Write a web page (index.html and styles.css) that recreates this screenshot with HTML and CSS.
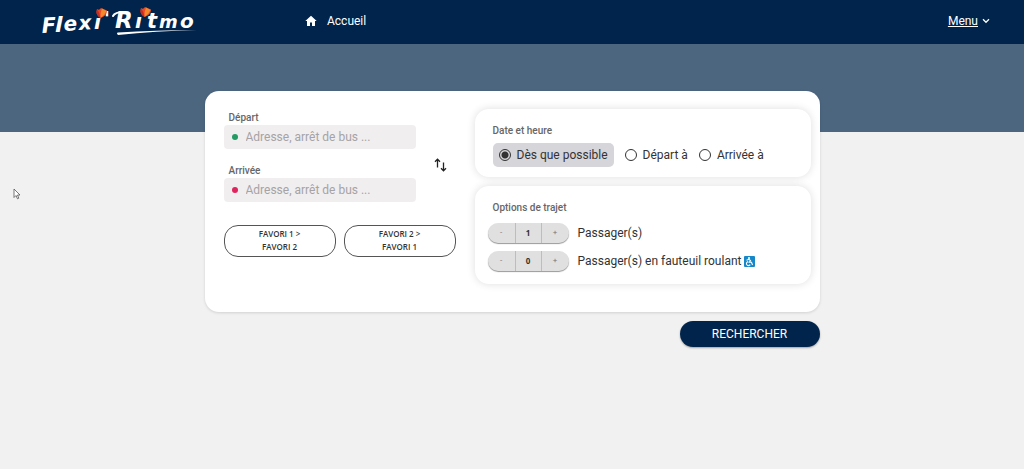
FILE: index.html
```html
<!DOCTYPE html>
<html lang="fr">
<head>
<meta charset="utf-8">
<meta name="viewport" content="width=device-width, initial-scale=1">
<title>Flexi'Ritmo</title>
<link rel="stylesheet" href="styles.css">
</head>
<body>
<header class="header">
  <a class="logo" href="#" aria-label="Flexi'Ritmo">
    <svg width="160" height="36" viewBox="0 0 160 36">
      <g class="logo-text">
        <text x="2" y="31" font-size="21" transform="rotate(-3 2 31)">F</text>
        <text x="15" y="30" font-size="22">l</text>
        <text x="24" y="29" font-size="20" transform="rotate(-4 24 29)">e</text>
        <text x="39" y="28" font-size="20" transform="rotate(-4 39 28)">x</text>
        <text x="54" y="27" font-size="20">ı</text>
        <text x="64" y="23" font-size="19">'</text>
        <text x="75" y="26" font-size="23">R</text>
        <text x="95" y="26" font-size="20">ı</text>
        <text x="107" y="26" font-size="21">t</text>
        <text x="119" y="26" font-size="18">m</text>
        <text x="140" y="26" font-size="20">o</text>
      </g>
      <path d="M73 14 Q75 10 84 10" fill="none" stroke="#fff" stroke-width="2" stroke-linecap="round"/>
      <path d="M78 30.500 Q115 28 157 28 Q115 29 78 33 Q76 31 78 30.500Z" fill="#fff"/>
      <g id="tulip">
        <path d="M57 7 Q59 9 61 6 L67 8.500 Q67 14 60.500 16 Q55 13 57 7Z" fill="#e94a27"/>
        <path d="M62 6.500 66.500 9Q65 13 60.500 16 Q60 11 62 6.500Z" fill="#f28a2c"/>
        <path d="M57 7 Q60 11 60.500 16 Q55 13 57 7Z" fill="#c92b22"/>
      </g>
      <use href="#tulip" x="44" y="-1"/>
    </svg>
  </a>
  <nav class="nav">
    <a class="home" href="#">
      <svg width="12" height="12" viewBox="0 0 12 12"><path d="M6 .8 11.700 6H10v5H7V7.500H5V11H2V6H.3Z" fill="#fff"/></svg>
      Accueil
    </a>
  </nav>
  <button class="menu" type="button"><span class="menu-text">Menu</span>
    <svg width="8" height="6" viewBox="0 0 8 6"><path d="M1 1.300 4 4.300 7 1.300" fill="none" stroke="#fff" stroke-width="1.300"/></svg>
  </button>
</header>
<main class="main">
  <form class="search">
    <div class="card">
      <div class="route">
        <div class="fields">
          <div class="inputs">
            <div class="field">
              <label class="label" for="from">Départ</label>
              <div class="box"><span class="dot"></span><input class="input" id="from" type="text" placeholder="Adresse, arrêt de bus ..."></div>
            </div>
            <div class="field">
              <label class="label" for="to">Arrivée</label>
              <div class="box"><span class="dot dot-to"></span><input class="input" id="to" type="text" placeholder="Adresse, arrêt de bus ..."></div>
            </div>
          </div>
          <button class="swap" type="button" aria-label="Inverser">
            <svg width="14" height="14" viewBox="0 0 14 14" fill="none" stroke="#222" stroke-width="1.300"><path d="M3.500 9.500V1.200M1 3.700 3.500 1.200 6 3.700M9.500 4.500v8.300M7 10.300l2.500 2.500 2.500-2.500"/></svg>
          </button>
        </div>
        <div class="favorites">
          <button class="favorite" type="button">FAVORI 1 &gt;<br>FAVORI 2</button>
          <button class="favorite" type="button">FAVORI 2 &gt;<br>FAVORI 1</button>
        </div>
      </div>
      <div class="settings">
        <section class="panel">
          <h2 class="title">Date et heure</h2>
          <div class="radios">
            <label class="choice choice-on"><input class="radio" type="radio" name="when" checked>Dès que possible</label>
            <label class="choice"><input class="radio" type="radio" name="when">Départ à</label>
            <label class="choice"><input class="radio" type="radio" name="when">Arrivée à</label>
          </div>
        </section>
        <section class="panel">
          <h2 class="title">Options de trajet</h2>
          <div class="options">
            <div class="option">
              <div class="stepper"><button class="step" type="button" aria-label="Moins">-</button><input class="count" id="seats" type="text" value="1"><button class="step" type="button" aria-label="Plus">+</button></div>
              <label for="seats">Passager(s)</label>
            </div>
            <div class="option">
              <div class="stepper"><button class="step" type="button" aria-label="Moins">-</button><input class="count" id="wheelchairs" type="text" value="0"><button class="step" type="button" aria-label="Plus">+</button></div>
              <label class="wheel" for="wheelchairs">Passager(s) en fauteuil roulant
                <svg width="11" height="11" viewBox="0 0 11 11"><rect width="11" height="11" rx="1" fill="#1688c9"/><circle cx="5" cy="2" r="1.100" fill="#fff"/><path d="M2.500 4.200 5 3.300 6.500 4.500 5.300 6.200H7.500L8.500 9M4.200 5.600a2 2 0 1 0 2 3" fill="none" stroke="#fff" stroke-width="1.100"/></svg>
              </label>
            </div>
          </div>
        </section>
      </div>
    </div>
    <button class="submit" type="submit">RECHERCHER</button>
  </form>
</main>
<svg class="cursor" width="8" height="12" viewBox="0 0 8 12"><path d="M1 1v8.500l2-2 1.500 3.300 1.300-.6L4.500 7H7Z" fill="#fff" stroke="#555" stroke-width=".8"/></svg>
</body>
</html>
```
FILE: styles.css
```css
* { box-sizing: border-box; }
body {
  margin: 0;
  min-height: 100vh;
  background: #f1f1f1;
  color: #333;
  font: 12px/16px Roboto, "Liberation Sans", sans-serif;
}
button, input { font: inherit; color: inherit; }
button { padding: 0; border: 0; background: none; cursor: pointer; }
svg { display: block; flex: none; }
.header {
  display: flex;
  align-items: center;
  height: 44px;
  padding: 0 34px 0 40px;
  background: #00244b;
  color: #fff;
}
.logo { margin-bottom: 5px; }
.logo-text { fill: #fff; font-family: "DejaVu Sans", sans-serif; font-weight: 700; font-style: italic; }
.nav { flex: 1; margin: 0 105px; padding-bottom: 1px; }
.home { display: inline-flex; align-items: center; gap: 10px; color: inherit; text-decoration: none; }
.menu { display: flex; align-items: center; gap: 4px; padding-bottom: 2px; }
.menu-text { text-decoration: underline; }
.main {
  padding-top: 47px;
  background: linear-gradient(#4c6680 88px, transparent 88px);
}
.search { width: 60%; min-width: 615px; margin: 0 auto; }
.card {
  display: flex;
  gap: 19px;
  padding: 18px 9px 28px 19px;
  border-radius: 14px;
  background: #fff;
  box-shadow: 0 1px 3px #0002;
}
.route { flex: 0 0 232px; }
.fields { display: flex; align-items: center; gap: 16px; }
.inputs { display: grid; flex: 1; gap: 13px; }
.label, .title { color: #666; font-size: 10px; font-weight: 500; }
.label { display: block; padding: 1px 0 0 5px; line-height: 15px; }
.box {
  display: flex;
  align-items: center;
  gap: 8px;
  height: 24px;
  padding: 0 8px;
  border-radius: 4px;
  background: #f1eef0;
}
.dot { flex: none; width: 6px; height: 6px; border-radius: 50%; background: #249b64; }
.dot-to { background: #e0245e; }
.input { width: 100%; min-width: 0; padding: 0; border: 0; outline: 0; background: none; }
.input::placeholder { color: #a5a3a5; opacity: 1; }
.swap { width: 24px; padding: 18px 0 0 2px; }
.favorites { display: grid; grid-template-columns: 1fr 1fr; gap: 8px; margin-top: 23px; }
.favorite {
  height: 32px;
  padding-bottom: 2px;
  border: 1px solid #555;
  border-radius: 14px;
  font: 600 8px/13px "Open Sans", sans-serif;
}
.settings { display: grid; flex: 1; gap: 9px; }
.panel {
  padding: 14px 18px 10px;
  border-radius: 14px;
  background: #fff;
  box-shadow: 0 0 8px #0002;
}
.title { margin: 0; line-height: 16px; }
.radios { display: flex; gap: 11px; margin-top: 4px; }
.choice { display: flex; align-items: center; gap: 6px; height: 24px; }
.choice-on { padding: 0 6px; border-radius: 5px; background: #d5d5da; }
.radio {
  appearance: none;
  width: 12px;
  height: 12px;
  margin: 0;
  border: 1px solid #333;
  border-radius: 50%;
}
.radio:checked { background: radial-gradient(circle, #333 3px, transparent 4px); }
.options { display: grid; gap: 8px; margin: 7px 0 3px -5px; }
.option { display: flex; align-items: center; gap: 9px; }
.stepper {
  display: flex;
  width: 81px;
  height: 20px;
  border-radius: 10px;
  background: #e0e0e0;
  box-shadow: 0 1px 1px #0006;
}
.step { flex: 1; color: #777; font-size: 8px; }
.count {
  width: 27px;
  padding: 0;
  border: 1px solid #bdbdbd;
  border-width: 0 1px;
  outline: 0;
  background: none;
  text-align: center;
  font: 700 8px/20px "Open Sans", sans-serif;
}
.wheel { display: flex; align-items: center; gap: 3px; }
.submit {
  display: block;
  width: 140px;
  height: 26px;
  margin: 9px 0 0 auto;
  border-radius: 13px;
  background: #00244b;
  box-shadow: 0 1px 2px #0005;
  color: #fff;
}
.cursor { position: absolute; left: 13px; top: 188px; }
```
